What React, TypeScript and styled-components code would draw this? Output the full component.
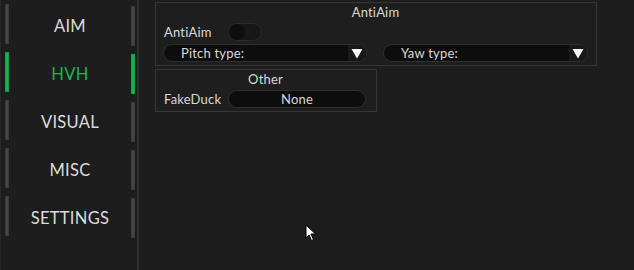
import React, { useState } from "react";
import styled, { createGlobalStyle } from "styled-components";

const Global = createGlobalStyle`
  html, body { margin: 0; padding: 0; background: #1d1d1d; }
  body { font-family: Lato, "Open Sans", "Noto Sans", sans-serif; }
  * { box-sizing: border-box; }
`;

const Frame = styled.div`
  position: relative;
  width: 634px;
  height: 270px;
  display: flex;
  background: #1d1d1d;
  border-left: 1px solid #262626;
  overflow: hidden;
`;

const Sidebar = styled.nav`
  width: 138px;
  flex: none;
  border-right: 2px solid #2e2e2e;
  padding-top: 4px;
  display: flex;
  flex-direction: column;
  gap: 8px;
`;

const Tab = styled.div`
  height: 40px;
  display: flex;
  align-items: stretch;
  padding-left: 4px;
  padding-right: 2px;
  cursor: pointer;
`;

const Bar = styled.div<{ $active: boolean; $offset?: number }>`
  width: 4px;
  flex: none;
  margin-top: ${(p) => p.$offset ?? 0}px;
  margin-bottom: ${(p) => -(p.$offset ?? 0)}px;
  background: ${(p) => (p.$active ? "#18b44c" : "#464646")};
  border: 1px solid ${(p) => (p.$active ? "#12a040" : "#3a3a3a")};
`;

const TabLabel = styled.div<{ $active: boolean }>`
  flex: 1;
  display: flex;
  align-items: center;
  justify-content: center;
  padding-top: 3px;
  font-size: 16.5px;
  color: ${(p) => (p.$active ? "#1cb34d" : "#dcdcdc")};
  letter-spacing: 0.3px;
`;

const Content = styled.main`
  flex: 1;
  padding: 2px 0 0 16px;
  display: flex;
  flex-direction: column;
  align-items: flex-start;
  gap: 3px;
`;

const Group = styled.section<{ $width: number }>`
  width: ${(p) => p.$width}px;
  border: 1px solid #363636;
  background: #1e1e1e;
  padding: 0 8px 3px 7px;
  display: flex;
  flex-direction: column;
  gap: 2px;
`;

const GroupTitle = styled.div`
  height: 18px;
  display: flex;
  align-items: center;
  justify-content: center;
  font-size: 13px;
  color: #d8d8d8;
  letter-spacing: 0.2px;
`;

const Row = styled.div`
  display: flex;
  align-items: center;
  height: 18px;
`;

const Label = styled.div`
  width: 65px;
  flex: none;
  font-size: 13px;
  color: #d8d8d8;
  padding-left: 1px;
  letter-spacing: 0.2px;
`;

const Toggle = styled.div`
  width: 34px;
  height: 18px;
  border-radius: 9px;
  background: #171717;
  border: 1px solid #2c2c2c;
  display: flex;
  align-items: center;
`;

const Knob = styled.div`
  width: 16px;
  height: 16px;
  border-radius: 50%;
  background: #0e0e0e;
`;

const SelectRow = styled.div`
  margin-top: 1px;
  display: grid;
  grid-template-columns: 204px 205px;
  column-gap: 16px;
  height: 18px;
`;

const Select = styled.div`
  height: 18px;
  border-radius: 9px;
  background: #0d0d0d;
  border: 1px solid #2f2f2f;
  display: flex;
  align-items: center;
  overflow: hidden;
  font-size: 13px;
  color: #d8d8d8;
  letter-spacing: 0.2px;
`;

const SelectText = styled.span`
  flex: 1;
  padding-left: 17px;
`;

const Arrow = styled.div`
  width: 18px;
  align-self: stretch;
  background: #191919;
  display: flex;
  align-items: center;
  justify-content: flex-start;
  padding-left: 3px;
`;

const Combo = styled.div`
  width: 138px;
  height: 18px;
  border-radius: 9px;
  background: #0d0d0d;
  border: 1px solid #2f2f2f;
  display: flex;
  align-items: center;
  justify-content: center;
  font-size: 13px;
  color: #d8d8d8;
  letter-spacing: 0.2px;
`;

const Cursor = styled.svg`
  position: absolute;
  left: 304px;
  top: 224px;
`;

const tabs = ["AIM", "HVH", "VISUAL", "MISC", "SETTINGS"];

const Triangle = () => (
  <svg width="12" height="11" viewBox="0 0 12 11">
    <polygon points="0.5,1 11.5,1 6,10.5" fill="#ffffff" />
  </svg>
);

export default function App() {
  const [active, setActive] = useState(1);
  return (
    <>
      <Global />
      <Frame>
        <Sidebar>
          {tabs.map((t, i) => (
            <Tab key={t} onClick={() => setActive(i)}>
              <Bar $active={i === active} />
              <TabLabel $active={i === active}>{t}</TabLabel>
              <Bar $active={i === active} $offset={2} />
            </Tab>
          ))}
        </Sidebar>
        <Content>
          <Group $width={442}>
            <GroupTitle>AntiAim</GroupTitle>
            <Row>
              <Label>AntiAim</Label>
              <Toggle>
                <Knob />
              </Toggle>
            </Row>
            <SelectRow>
              <Select>
                <SelectText>Pitch type:</SelectText>
                <Arrow>
                  <Triangle />
                </Arrow>
              </Select>
              <Select>
                <SelectText>Yaw type:</SelectText>
                <Arrow>
                  <Triangle />
                </Arrow>
              </Select>
            </SelectRow>
          </Group>
          <Group $width={222}>
            <GroupTitle>Other</GroupTitle>
            <Row>
              <Label>FakeDuck</Label>
              <Combo>None</Combo>
            </Row>
          </Group>
        </Content>
        <Cursor width="12" height="18" viewBox="0 0 12 18">
          <path
            d="M1 1 L1 14 L4 11 L6.5 16.5 L8.5 15.5 L6 10 L10.5 10 Z"
            fill="#ffffff"
            stroke="#000000"
            strokeWidth="1"
            strokeLinejoin="round"
          />
        </Cursor>
      </Frame>
    </>
  );
}
